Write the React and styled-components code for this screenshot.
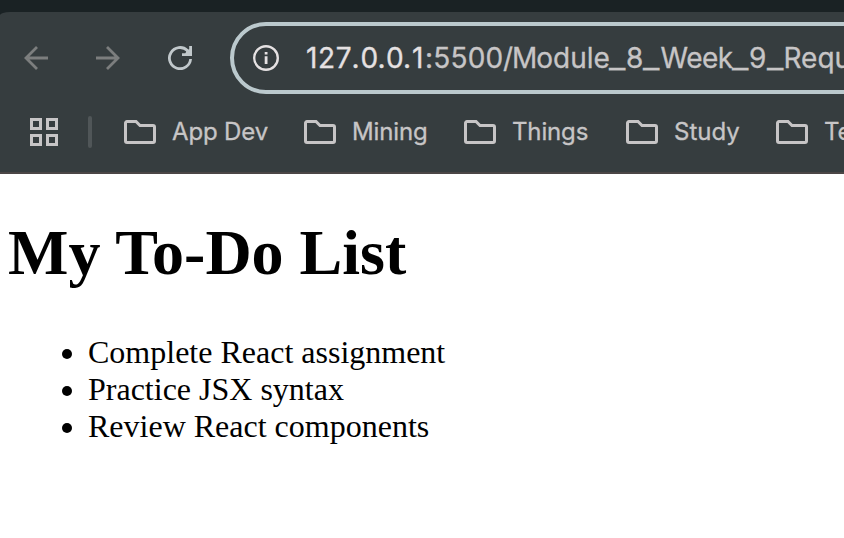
import React from "react";
import styled, { createGlobalStyle } from "styled-components";

const GlobalStyle = createGlobalStyle`
  * { box-sizing: border-box; }
  body { margin: 0; background: #fff; overflow: hidden; }
`;

const Window = styled.div`
  display: flex;
  flex-direction: column;
  width: 844px;
  height: 538px;
  overflow: hidden;
  background: #fff;
`;

const Frame = styled.header`
  flex: none;
  height: 174px;
  padding-top: 12px;
  background: #1a2224;
  font-family: Inter, "Liberation Sans", sans-serif;
  color: #c7c5c6;
`;

const Chrome = styled.div`
  height: 162px;
  padding-top: 10px;
  overflow: hidden;
  background: #363d3f;
  border-top-left-radius: 10px 3px;
  border-bottom: 2px solid #4b4646;
`;

const NavRow = styled.div`
  display: flex;
  align-items: center;
  height: 72px;
`;

const NavButtons = styled.div`
  flex: none;
  display: flex;
  gap: 48px;
  width: 230px;
  padding-left: 24px;
`;

const NavIcon = styled.svg`
  flex: none;
  display: block;
  width: 24px;
  height: 24px;
  fill: none;
  stroke: ${(p) => (p.$active ? "#c1c8cb" : "#7c7e7e")};
  stroke-width: 2.8;
`;

const AddressBar = styled.div`
  flex: none;
  display: flex;
  align-items: center;
  width: 680px;
  height: 72px;
  padding-left: 19px;
  border: 4px solid #bbc9cd;
  border-radius: 36px;
`;

const InfoIcon = styled.svg`
  flex: none;
  width: 26px;
  height: 26px;
  margin-right: 27px;
`;

const Url = styled.span`
  white-space: nowrap;
  font-size: 28px;
  line-height: 36px;
  -webkit-text-stroke: 0.3px currentColor;
`;

const Host = styled.span`
  color: #e5e1e2;
`;

const UrlPart = styled.span`
  display: inline-block;
  width: ${(p) => p.$width}px;
  letter-spacing: ${(p) => p.$spacing || 0}px;
`;

const Underscore = styled(UrlPart)`
  transform: scaleX(1.28);
  transform-origin: left;
`;

const Bookmarks = styled.nav`
  display: flex;
  align-items: center;
  height: 76px;
  padding-left: 30px;
`;

const AppsIcon = styled.svg`
  flex: none;
  width: 28px;
  height: 28px;
  fill: none;
  stroke: #c7c5c6;
  stroke-width: 3;
`;

const Divider = styled.span`
  flex: none;
  width: 4px;
  height: 32px;
  margin: 0 32px 0 30px;
  border-radius: 2px;
  background: #505658;
`;

const Bookmark = styled.div`
  flex: none;
  display: flex;
  align-items: center;
  gap: 16px;
  width: ${(p) => p.$width}px;
  white-space: nowrap;
  font-size: 24px;
  line-height: 30px;
`;

const BookmarkLabel = styled.span`
  letter-spacing: ${(p) => p.$spacing}px;
  -webkit-text-stroke: 0.3px currentColor;
`;

const FolderIcon = styled.svg`
  flex: none;
  width: 32px;
  height: 24px;
  fill: none;
  stroke: #c7c5c6;
  stroke-width: 3;
`;

const Page = styled.main`
  padding: 0 8px;
  font-family: "Liberation Serif", "Times New Roman", serif;
  color: #000;
`;

const Heading = styled.h1`
  margin: 42px 0 44px;
  font-size: 64px;
  line-height: 74px;
  font-weight: 700;
`;

const TodoList = styled.ul`
  margin: 0;
  padding-left: 80px;
  font-size: 32px;
  line-height: 37px;
`;

const hostParts = [
  { text: "127", width: 45.5, spacing: 0.7 },
  { text: ".", width: 9 },
  { text: "0.", width: 25.5 },
  { text: "0.", width: 26 },
  { text: "1", width: 13 },
];

const pathParts = [
  { text: ":5500", width: 78, spacing: 0.2 },
  { text: "/", width: 9 },
  { text: "M", width: 24.3 },
  { text: "odule", width: 72.7 },
  { text: "_", width: 17 },
  { text: "8", width: 17 },
  { text: "_", width: 17.5 },
  { text: "Week", width: 72, spacing: -0.5 },
  { text: "_", width: 16.5 },
  { text: "9", width: 18 },
  { text: "_", width: 16.5 },
  { text: "Requ", width: 70 },
];

const folders = [
  { name: "App Dev", width: 180, spacing: -0.15 },
  { name: "Mining", width: 160, spacing: -0.15 },
  { name: "Things", width: 162, spacing: -0.15 },
  { name: "Study", width: 150, spacing: 0 },
  { name: "Te", width: 60, spacing: 0 },
];

const todos = [
  "Complete React assignment",
  "Practice JSX syntax",
  "Review React components",
];

function renderPart(part, i) {
  const Part = part.text === "_" ? Underscore : UrlPart;
  return (
    <Part key={i} $width={part.width} $spacing={part.spacing}>
      {part.text}
    </Part>
  );
}

export default function App() {
  return (
    <Window>
      <GlobalStyle />
      <Frame>
        <Chrome>
          <NavRow>
            <NavButtons>
              <NavIcon viewBox="0 0 24 24">
                <path d="M24 12H2M13 1 2 12l11 11" />
              </NavIcon>
              <NavIcon viewBox="0 0 24 24">
                <path d="M0 12h22M11 1l11 11-11 11" />
              </NavIcon>
              <NavIcon viewBox="0 0 24 24" $active>
                <path d="M22.6 13A10.6 10.6 0 1 1 19.4 4.5L22 7.5M22.6 0v8.6H14" />
                <path d="M18.5 4.5 22 3v5.5h-5z" fill="#c1c8cb" stroke="none" />
              </NavIcon>
            </NavButtons>
            <AddressBar>
              <InfoIcon viewBox="0 0 26 26">
                <circle cx="13" cy="13" r="11.8" fill="none" stroke="#e5e1e2" strokeWidth="2.4" />
                <path d="M11.7 7h2.8v2.6h-2.8zM11.7 11.3h2.8V19h-2.8z" fill="#e5e1e2" />
              </InfoIcon>
              <Url>
                <Host>{hostParts.map(renderPart)}</Host>
                {pathParts.map(renderPart)}
              </Url>
            </AddressBar>
          </NavRow>
          <Bookmarks>
            <AppsIcon viewBox="0 0 28 28">
              <path d="M1.5 1.5h9v9h-9zM17.5 1.5h9v9h-9zM1.5 17.5h9v9h-9zM17.5 17.5h9v9h-9z" />
            </AppsIcon>
            <Divider />
            {folders.map((f) => (
              <Bookmark key={f.name} $width={f.width}>
                <FolderIcon viewBox="0 0 32 24">
                  <path d="M3 1.5h9L16 5.5h13a1.5 1.5 0 0 1 1.5 1.5v14a1.5 1.5 0 0 1-1.5 1.5H3A1.5 1.5 0 0 1 1.5 21V3A1.5 1.5 0 0 1 3 1.5z" />
                </FolderIcon>
                <BookmarkLabel $spacing={f.spacing}>{f.name}</BookmarkLabel>
              </Bookmark>
            ))}
          </Bookmarks>
        </Chrome>
      </Frame>
      <Page>
        <Heading>My To-Do List</Heading>
        <TodoList>
          {todos.map((t) => (
            <li key={t}>{t}</li>
          ))}
        </TodoList>
      </Page>
    </Window>
  );
}
